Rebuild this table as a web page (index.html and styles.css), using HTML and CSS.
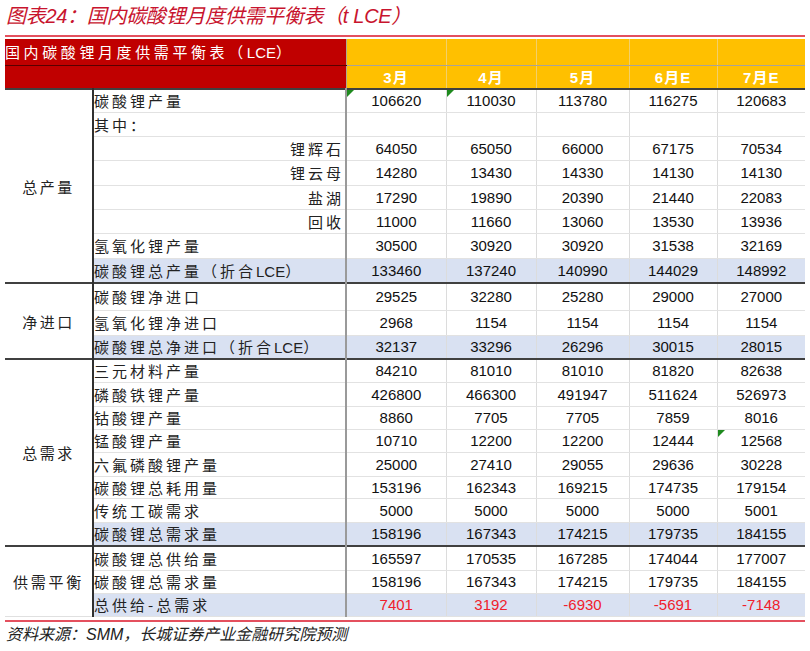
FILE: index.html
```html
<!DOCTYPE html>
<html lang="zh-CN">
<head>
<meta charset="utf-8">
<title>国内碳酸锂月度供需平衡表</title>
<link rel="stylesheet" href="styles.css">
</head>
<body>
<div class="page">
  <div class="title">图表24：国内碳酸锂月度供需平衡表（t LCE）</div>
  <table class="bal">
    <colgroup>
      <col class="c-grp"><col class="c-lbl"><col class="c-m3"><col class="c-m4"><col class="c-m5"><col class="c-m6"><col class="c-m7">
    </colgroup>
    <thead>
      <tr class="hr1">
        <th class="hred htitle" colspan="2">国内碳酸锂月度供需平衡表（<span class="lat">LCE</span>）</th>
        <th class="hy first"></th><th class="hy"></th><th class="hy"></th><th class="hy"></th><th class="hy"></th>
      </tr>
      <tr class="hr2">
        <th class="hred" colspan="2"></th>
        <th class="hy first">3月</th><th class="hy">4月</th><th class="hy">5月</th><th class="hy">6月E</th><th class="hy">7月E</th>
      </tr>
    </thead>
    <tbody class="sec">
      <tr class="h23"><td class="grp" rowspan="8">总产量</td><td class="lbl">碳酸锂产量</td><td class="num first tri">106620</td><td class="num tri">110030</td><td class="num">113780</td><td class="num">116275</td><td class="num">120683</td></tr>
      <tr class="h24"><td class="lbl">其中：</td><td class="num first"></td><td class="num"></td><td class="num"></td><td class="num"></td><td class="num"></td></tr>
      <tr class="h24"><td class="lbl right">锂辉石</td><td class="num first">64050</td><td class="num">65050</td><td class="num">66000</td><td class="num">67175</td><td class="num">70534</td></tr>
      <tr class="h25"><td class="lbl right">锂云母</td><td class="num first">14280</td><td class="num">13430</td><td class="num">14330</td><td class="num">14130</td><td class="num">14130</td></tr>
      <tr class="h24"><td class="lbl right">盐湖</td><td class="num first">17290</td><td class="num">19890</td><td class="num">20390</td><td class="num">21440</td><td class="num">22083</td></tr>
      <tr class="h24"><td class="lbl right">回收</td><td class="num first">11000</td><td class="num">11660</td><td class="num">13060</td><td class="num">13530</td><td class="num">13936</td></tr>
      <tr class="h25"><td class="lbl">氢氧化锂产量</td><td class="num first">30500</td><td class="num">30920</td><td class="num">30920</td><td class="num">31538</td><td class="num">32169</td></tr>
      <tr class="h25 shade"><td class="lbl">碳酸锂总产量（折合<span class="lat">LCE</span>）</td><td class="num first">133460</td><td class="num">137240</td><td class="num">140990</td><td class="num">144029</td><td class="num">148992</td></tr>
    </tbody>
    <tbody class="sec">
      <tr class="h27"><td class="grp" rowspan="3">净进口</td><td class="lbl">碳酸锂净进口</td><td class="num first">29525</td><td class="num">32280</td><td class="num">25280</td><td class="num">29000</td><td class="num">27000</td></tr>
      <tr class="h25"><td class="lbl">氢氧化锂净进口</td><td class="num first">2968</td><td class="num">1154</td><td class="num">1154</td><td class="num">1154</td><td class="num">1154</td></tr>
      <tr class="h24 shade"><td class="lbl">碳酸锂总净进口（折合<span class="lat">LCE</span>）</td><td class="num first">32137</td><td class="num">33296</td><td class="num">26296</td><td class="num">30015</td><td class="num">28015</td></tr>
    </tbody>
    <tbody class="sec">
      <tr class="h23"><td class="grp" rowspan="8">总需求</td><td class="lbl">三元材料产量</td><td class="num first">84210</td><td class="num">81010</td><td class="num">81010</td><td class="num">81820</td><td class="num">82638</td></tr>
      <tr class="h24"><td class="lbl">磷酸铁锂产量</td><td class="num first">426800</td><td class="num">466300</td><td class="num">491947</td><td class="num">511624</td><td class="num">526973</td></tr>
      <tr class="h23"><td class="lbl">钴酸锂产量</td><td class="num first">8860</td><td class="num">7705</td><td class="num">7705</td><td class="num">7859</td><td class="num">8016</td></tr>
      <tr class="h23"><td class="lbl">锰酸锂产量</td><td class="num first">10710</td><td class="num">12200</td><td class="num">12200</td><td class="num">12444</td><td class="num tri">12568</td></tr>
      <tr class="h24"><td class="lbl">六氟磷酸锂产量</td><td class="num first">25000</td><td class="num">27410</td><td class="num">29055</td><td class="num">29636</td><td class="num">30228</td></tr>
      <tr class="h22"><td class="lbl">碳酸锂总耗用量</td><td class="num first">153196</td><td class="num">162343</td><td class="num">169215</td><td class="num">174735</td><td class="num">179154</td></tr>
      <tr class="h24"><td class="lbl">传统工碳需求</td><td class="num first">5000</td><td class="num">5000</td><td class="num">5000</td><td class="num">5000</td><td class="num">5001</td></tr>
      <tr class="h24 shade"><td class="lbl">碳酸锂总需求量</td><td class="num first">158196</td><td class="num">167343</td><td class="num">174215</td><td class="num">179735</td><td class="num">184155</td></tr>
    </tbody>
    <tbody class="sec">
      <tr class="h24"><td class="grp wide" rowspan="3">供需平衡</td><td class="lbl">碳酸锂总供给量</td><td class="num first">165597</td><td class="num">170535</td><td class="num">167285</td><td class="num">174044</td><td class="num">177007</td></tr>
      <tr class="h23"><td class="lbl">碳酸锂总需求量</td><td class="num first">158196</td><td class="num">167343</td><td class="num">174215</td><td class="num">179735</td><td class="num">184155</td></tr>
      <tr class="h23 shade neg"><td class="lbl">总供给-总需求</td><td class="num first">7401</td><td class="num">3192</td><td class="num">-6930</td><td class="num">-5691</td><td class="num">-7148</td></tr>
    </tbody>
  </table>
  <div class="rule"></div>
  <div class="source">资料来源：SMM，长城证券产业金融研究院预测</div>
</div>
</body>
</html>
```

FILE: styles.css
```css
html, body {
  margin: 0;
  padding: 0;
  background: #ffffff;
}

body {
  font-family: "Liberation Sans", "Noto Sans CJK SC", sans-serif;
  color: #1a1a1a;
}

.page {
  width: 800px;
  padding: 0 5px;
}

.title {
  height: 35px;
  line-height: 33px;
  font-size: 20px;
  font-style: italic;
  color: #c8142e;
  font-family: "Liberation Sans", "Noto Sans CJK SC", sans-serif;
  border-bottom: 2px solid #e4505e;
  margin-bottom: 2px;
  padding-left: 1px;
  letter-spacing: -0.3px;
  white-space: nowrap;
}

.bal {
  width: 800px;
  border-collapse: collapse;
  table-layout: fixed;
}

.c-grp { width: 88px; }
.c-lbl { width: 253px; }
.c-m3 { width: 100px; }
.c-m4 { width: 90px; }
.c-m5 { width: 93px; }
.c-m6 { width: 88px; }
.c-m7 { width: 88px; }

.bal th,
.bal td {
  padding: 0;
  overflow: hidden;
  white-space: nowrap;
}

.hr1 { height: 26px; }
.hr2 { height: 24px; }

.hred {
  background: #c00000;
  color: #ffffff;
  border-bottom: 1px solid #5a0000;
}

.htitle {
  text-align: left;
  padding-left: 9px;
  font-family: "Noto Sans CJK SC", sans-serif;
  font-weight: 400;
  font-size: 15px;
  letter-spacing: 3.6px;
}

.lat {
  letter-spacing: 0;
  font-family: "Liberation Sans", sans-serif;
}

.hy {
  background: #ffc000;
  color: #ffffff;
  font-family: "Liberation Sans", "Noto Sans CJK SC", sans-serif;
  font-weight: 700;
  font-size: 15px;
  letter-spacing: 1px;
  text-align: center;
  border-left: 1px solid #f2cf6a;
}

.hr1 .hy {
  border-bottom: 1px solid #a8a39a;
}

.hy.first {
  border-left: 1px solid #b0a890;
}

.sec {
  border-top: 2px solid #404040;
}

.sec:last-child {
  border-bottom: 1px solid #e0e0e0;
}

.h22 { height: 22px; }
.h23 { height: 23px; }
.h24 { height: 24px; }
.h25 { height: 25px; }
.h27 { height: 27px; }

.grp {
  font-family: "Noto Sans CJK SC", sans-serif;
  font-size: 15px;
  letter-spacing: 2.5px;
  padding-left: 2px;
  text-align: center;
  vertical-align: middle;
  color: #222222;
  border-right: 2px solid #303030;
  background: #ffffff;
}

.grp.wide {
  letter-spacing: 2.8px;
}

.lbl {
  font-family: "Noto Sans CJK SC", sans-serif;
  font-size: 15px;
  letter-spacing: 3px;
  color: #222222;
  text-align: left;
  padding-left: 5px;
  border-bottom: 1px solid #e2e2e2;
}

.lbl.right {
  text-align: right;
  padding-right: 1px;
}

.num {
  font-size: 15px;
  text-align: center;
  color: #111111;
  border-left: 1px solid #dcdcdc;
  border-bottom: 1px solid #e2e2e2;
}

.num.first {
  border-left: 2px solid #9a9a9a;
}

.shade .lbl,
.shade .num {
  background: #d9e1f2;
}

.neg .num {
  color: #f0202c;
}

.tri {
  position: relative;
}

.tri::before {
  content: "";
  position: absolute;
  left: 0;
  top: 0;
  width: 0;
  height: 0;
  border-top: 7px solid #1e8a1e;
  border-right: 7px solid transparent;
}

.rule {
  margin-top: 3px;
  border-top: 2px solid #e4505e;
}

.source {
  font-size: 16px;
  font-style: italic;
  color: #222222;
  line-height: 26px;
  padding-left: 1px;
  white-space: nowrap;
}
```
